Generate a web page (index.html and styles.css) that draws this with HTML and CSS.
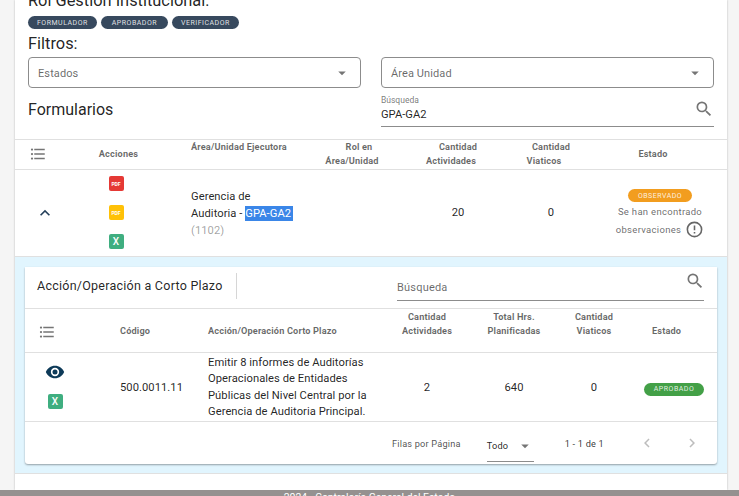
FILE: index.html
```html
<!DOCTYPE html>
<html lang="en">
<head>
  <meta charset="UTF-8">
  <title>Formularios</title>
  <link rel="stylesheet" href="styles.css">
</head>
<body>
  <svg class="sprite" width="0" height="0">
    <symbol id="i-list" viewBox="0 0 24 24"><path d="M7,5H21V7H7V5M7,13V11H21V13H7M4,4.5A1.5,1.5 0 0,1 5.5,6A1.5,1.5 0 0,1 4,7.5A1.5,1.5 0 0,1 2.5,6A1.5,1.5 0 0,1 4,4.5M4,10.5A1.5,1.5 0 0,1 5.5,12A1.5,1.5 0 0,1 4,13.5A1.5,1.5 0 0,1 2.5,12A1.5,1.5 0 0,1 4,10.5M7,19V17H21V19H7M4,16.5A1.5,1.5 0 0,1 5.5,18A1.5,1.5 0 0,1 4,19.5A1.5,1.5 0 0,1 2.5,18A1.5,1.5 0 0,1 4,16.5Z"/></symbol>
    <symbol id="i-search" viewBox="0 0 24 24"><path d="M9.5,3A6.5,6.5 0 0,1 16,9.5C16,11.11 15.41,12.59 14.44,13.73L14.71,14H15.5L20.5,19L19,20.5L14,15.5V14.71L13.73,14.44C12.59,15.41 11.11,16 9.5,16A6.5,6.5 0 0,1 3,9.5A6.5,6.5 0 0,1 9.5,3M9.5,5C7,5 5,7 5,9.5C5,12 7,14 9.5,14C12,14 14,12 14,9.5C14,7 12,5 9.5,5Z"/></symbol>
    <symbol id="i-down" viewBox="0 0 24 24"><path d="M7,10L12,15L17,10H7Z"/></symbol>
    <symbol id="i-up" viewBox="0 0 24 24"><path d="M7.41,15.41L12,10.83L16.59,15.41L18,14L12,8L6,14L7.41,15.41Z"/></symbol>
    <symbol id="i-left" viewBox="0 0 24 24"><path d="M15.41,16.58L10.83,12L15.41,7.41L14,6L8,12L14,18L15.41,16.58Z"/></symbol>
    <symbol id="i-right" viewBox="0 0 24 24"><path d="M8.59,16.58L13.17,12L8.59,7.41L10,6L16,12L10,18L8.59,16.58Z"/></symbol>
    <symbol id="i-alert" viewBox="0 0 24 24"><path d="M11,15H13V17H11V15M11,7H13V13H11V7M12,2C6.47,2 2,6.48 2,12A10,10 0 0,0 12,22A10,10 0 0,0 22,12A10,10 0 0,0 12,2M12,20A8,8 0 0,1 4,12A8,8 0 0,1 12,4A8,8 0 0,1 20,12A8,8 0 0,1 12,20Z"/></symbol>
    <symbol id="i-eye" viewBox="0 0 24 24"><path d="M12,9A3,3 0 0,0 9,12A3,3 0 0,0 12,15A3,3 0 0,0 15,12A3,3 0 0,0 12,9M12,17A5,5 0 0,1 7,12A5,5 0 0,1 12,7A5,5 0 0,1 17,12A5,5 0 0,1 12,17M12,4.5C7,4.5 2.73,7.61 1,12C2.73,16.39 7,19.5 12,19.5C17,19.5 21.27,16.39 23,12C21.27,7.61 17,4.5 12,4.5Z"/></symbol>
  </svg>

  <div class="page">
    <main class="card">
      <div class="top">
        <h2 class="title">Rol Gestión Institucional:</h2>
        <div class="chips">
          <span class="chip chip-navy">FORMULADOR</span>
          <span class="chip chip-navy">APROBADOR</span>
          <span class="chip chip-navy">VERIFICADOR</span>
        </div>
        <h2 class="title title-filter">Filtros:</h2>
        <div class="filters">
          <div class="select"><span>Estados</span><svg class="ic-down"><use href="#i-down"/></svg></div>
          <div class="select"><span>Área Unidad</span><svg class="ic-down"><use href="#i-down"/></svg></div>
          <h2 class="title title-forms">Formularios</h2>
          <div class="search">
            <div class="search-text">
              <label>Búsqueda</label>
              <div class="search-value">GPA-GA2</div>
            </div>
            <svg class="ic-search"><use href="#i-search"/></svg>
          </div>
        </div>
      </div>

      <table class="grid outer">
        <colgroup>
          <col class="o1"><col class="o2"><col class="o3"><col class="o4"><col class="o5"><col class="o6"><col class="o7">
        </colgroup>
        <thead>
          <tr>
            <th><svg class="ic-list"><use href="#i-list"/></svg><span class="sort"></span></th>
            <th class="th-actions">Acciones</th>
            <th class="th-area">Área/Unidad Ejecutora</th>
            <th>Rol en<br>Área/Unidad<span class="sort"></span></th>
            <th>Cantidad<br>Actividades<span class="sort"></span></th>
            <th>Cantidad<br>Viaticos<span class="sort"></span></th>
            <th class="th-last">Estado<span class="sort"></span></th>
          </tr>
        </thead>
        <tbody>
          <tr class="main-row">
            <td><svg class="ic-up"><use href="#i-up"/></svg></td>
            <td>
              <div class="actions">
                <span class="doc doc-red">PDF</span>
                <span class="doc doc-amber">PDF</span>
                <span class="doc doc-green">X</span>
              </div>
            </td>
            <td class="td-area">Gerencia de<br>Auditoria - <span class="hl">GPA-GA2</span><br><span class="muted">(1102)</span></td>
            <td></td>
            <td>20</td>
            <td>0</td>
            <td class="td-last">
              <span class="chip chip-orange">OBSERVADO</span>
              <div class="obs">Se han encontrado</div>
              <div class="obs obs-line">observaciones <svg class="ic-alert"><use href="#i-alert"/></svg></div>
            </td>
          </tr>
        </tbody>
      </table>

      <section class="detail">
        <div class="panel">
          <div class="panel-head">
            <div class="panel-title">Acción/Operación a Corto Plazo</div>
            <div class="panel-search">
              <span>Búsqueda</span>
              <svg class="ic-search"><use href="#i-search"/></svg>
            </div>
          </div>
          <table class="grid inner">
            <colgroup>
              <col class="i1"><col class="i2"><col class="i3"><col class="i4"><col class="i5"><col class="i6"><col class="i7">
            </colgroup>
            <thead>
              <tr>
                <th><svg class="ic-list"><use href="#i-list"/></svg><span class="sort sort-wide"></span></th>
                <th class="left code">Código</th>
                <th class="left desc">Acción/Operación Corto Plazo</th>
                <th>Cantidad<br>Actividades</th>
                <th>Total Hrs.<br>Planificadas</th>
                <th>Cantidad<br>Viaticos</th>
                <th class="left status">Estado</th>
              </tr>
            </thead>
            <tbody>
              <tr class="sub-row">
                <td>
                  <div class="actions actions-sub">
                    <svg class="ic-eye"><use href="#i-eye"/></svg>
                    <span class="doc doc-green">X</span>
                  </div>
                </td>
                <td class="left code">500.0011.11</td>
                <td class="left desc">Emitir 8 informes de Auditorías Operacionales de Entidades Públicas del Nivel Central por la Gerencia de Auditoria Principal.</td>
                <td>2</td>
                <td>640</td>
                <td>0</td>
                <td class="left status"><span class="chip chip-green">APROBADO</span></td>
              </tr>
            </tbody>
          </table>
          <div class="pager">
            <span class="pager-label">Filas por Página</span>
            <div class="pager-select"><span>Todo</span><svg class="ic-down"><use href="#i-down"/></svg></div>
            <span class="pager-count">1 - 1 de 1</span>
            <svg class="ic-nav"><use href="#i-left"/></svg>
            <svg class="ic-nav"><use href="#i-right"/></svg>
          </div>
        </div>
      </section>
    </main>
    <footer class="footer">2024 - Contraloría General del Estado</footer>
  </div>
</body>
</html>
```

FILE: styles.css
```css
* {
  box-sizing: border-box;
}
html, body {
  margin: 0;
  height: 100%;
  overflow: hidden;
}
body {
  background: #f5f5f5;
  font-family: Roboto, "Liberation Sans", sans-serif;
  color: rgba(0, 0, 0, .87);
}
svg {
  fill: currentColor;
  display: inline-block;
}
.sprite {
  position: absolute;
}
.page {
  height: 496px;
  display: flex;
  flex-direction: column;
  overflow: hidden;
}

/* main card */
.card {
  flex: 1;
  min-height: 0;
  margin: 0 12px 0 15px;
  background: #fff;
  box-shadow: 0 0 2px rgba(0, 0, 0, .25);
}
.top {
  margin-top: -10px;
  padding: 0 13px;
  height: 149px;
}
.title {
  margin: 0;
  font-size: 16.4px;
  font-weight: 400;
  line-height: 22px;
}
.chips {
  display: flex;
  gap: 4px;
  margin-top: 4px;
}
.chip {
  display: inline-flex;
  align-items: center;
  justify-content: center;
  height: 13px;
  border-radius: 7px;
  font-size: 7px;
  letter-spacing: .5px;
  color: rgba(255, 255, 255, .85);
}
.chip-navy {
  background: #37495e;
  padding: 0 9px;
}
.chip-navy:nth-child(2) {
  padding: 0 11px;
}
.chip-orange {
  background: #f29d1f;
  width: 64px;
}
.chip-green {
  background: #43a047;
  width: 60px;
  margin: 4px 0 0 -8px;
}
.title-filter {
  margin-top: 4px;
}
.filters {
  display: grid;
  grid-template-columns: 333px 333px;
  column-gap: 20px;
  margin-top: 2px;
}
.select {
  height: 31px;
  border: 1px solid #8c8c8c;
  border-radius: 4px;
  padding: 0 9px;
  display: flex;
  align-items: center;
  justify-content: space-between;
  font-size: 11px;
  letter-spacing: .1px;
  color: rgba(0, 0, 0, .6);
}
.select span {
  margin-top: 2px;
}
.ic-down {
  width: 18px;
  height: 18px;
  color: rgba(0, 0, 0, .54);
}
.title-forms {
  font-size: 16px;
  margin-top: 11px;
}
.search {
  display: flex;
  justify-content: space-between;
  align-items: center;
  height: 35px;
  margin-top: 4px;
  border-bottom: 1px solid #8c8c8c;
}
.search label {
  display: block;
  font-size: 8.5px;
  line-height: 11px;
  color: rgba(0, 0, 0, .55);
}
.search-value {
  font-size: 11.2px;
  line-height: 18px;
}
.ic-search {
  width: 20px;
  height: 20px;
  color: rgba(0, 0, 0, .54);
}

/* tables */
.grid {
  width: 100%;
  table-layout: fixed;
  border-collapse: collapse;
}
.grid th {
  font-size: 9.2px;
  font-weight: 700;
  line-height: 14px;
  letter-spacing: .15px;
  color: rgba(0, 0, 0, .6);
  text-align: center;
  vertical-align: middle;
  padding: 0;
}
.grid td {
  font-size: 11.2px;
  letter-spacing: .05px;
  text-align: center;
  vertical-align: middle;
  padding: 0;
}
.grid .left {
  text-align: left;
}
.sort {
  display: inline-block;
  width: 14px;
}
.sort-wide {
  width: 16px;
}
.ic-list {
  width: 18px;
  height: 18px;
  color: rgba(0, 0, 0, .54);
  vertical-align: middle;
}
.outer {
  border-top: 1px solid #e0e0e0;
}
.outer thead tr {
  height: 29px;
  border-bottom: 1px solid #e0e0e0;
}
.outer thead th {
  padding-bottom: 1px;
}
.o1 { width: 60px; }
.o2 { width: 82px; }
.o3 { width: 158px; }
.o4 { width: 88px; }
.o5 { width: 110px; }
.o6 { width: 76px; }
.o7 { width: auto; }
.outer .th-actions {
  padding-left: 5px;
}
.outer .th-area {
  text-align: left;
  vertical-align: top;
  padding: 0 0 0 34px;
}
.outer .th-last {
  padding-left: 4px;
}
.outer .td-last {
  padding: 1px 0 0 4px;
}
.outer .td-area {
  text-align: left;
  padding: 2px 0 0 34px;
  line-height: 17px;
}
.main-row {
  height: 86px;
}
.ic-up {
  width: 20px;
  height: 20px;
  color: #243f5a;
  vertical-align: middle;
}
.actions {
  display: flex;
  flex-direction: column;
  align-items: center;
  gap: 14px;
}
.doc {
  display: flex;
  align-items: center;
  justify-content: center;
  width: 15px;
  height: 15px;
  border-radius: 2px;
  color: #fff;
  font-size: 5px;
  font-weight: 700;
  letter-spacing: 0;
}
.doc-red { background: #e53935; }
.doc-amber { background: #ffc107; }
.doc-green {
  background: #3fae80;
  font-size: 10px;
  font-weight: 500;
}
.hl {
  background: #3a86e8;
  color: #fff;
  padding: 1px 2px 1px 0;
}
.muted {
  color: rgba(0, 0, 0, .38);
}
.td-last .chip {
  margin-bottom: 1px;
}
.obs {
  font-size: 9.5px;
  line-height: 17px;
  letter-spacing: .3px;
  color: rgba(0, 0, 0, .6);
}
.obs-line {
  display: flex;
  justify-content: center;
  align-items: center;
  gap: 4px;
  line-height: 18px;
}
.ic-alert {
  width: 19px;
  height: 19px;
  color: rgba(0, 0, 0, .6);
}

/* expanded row */
.detail {
  background: #e1f5fe;
  border-top: 1px solid #e0e0e0;
  border-bottom: 1px solid #e0e0e0;
  padding: 10px;
  height: 218px;
}
.panel {
  background: #fff;
  border-radius: 0 0 3px 3px;
  box-shadow: 0 1px 2px rgba(0, 0, 0, .35);
  height: 197px;
}
.panel-head {
  height: 42px;
  display: flex;
  align-items: stretch;
  border-bottom: 1px solid #e0e0e0;
}
.panel-title {
  width: 212px;
  margin: 6px 0 9px;
  padding-left: 12px;
  border-right: 1px solid #d6d6d6;
  font-size: 12.5px;
  letter-spacing: .25px;
  line-height: 26px;
}
.panel-search {
  width: 307px;
  height: 34px;
  margin-left: 160px;
  display: flex;
  justify-content: space-between;
  align-items: flex-start;
  border-bottom: 1px solid #8c8c8c;
  font-size: 11px;
  letter-spacing: .2px;
  color: rgba(0, 0, 0, .6);
}
.panel-search span {
  margin-top: 14px;
}
.panel-search .ic-search {
  margin: 4px -1px 0 0;
}
.i1 { width: 60px; }
.i2 { width: 107px; }
.i3 { width: 192px; }
.i4 { width: 86px; }
.i5 { width: 88px; }
.i6 { width: 72px; }
.i7 { width: auto; }
.inner thead tr {
  height: 44px;
  border-bottom: 1px solid #e0e0e0;
}
.inner thead th {
  vertical-align: bottom;
  padding-bottom: 14px;
}
.inner .ic-list {
  margin-bottom: -3px;
}
.inner .code {
  padding-left: 35px;
}
.inner .desc {
  padding-left: 16px;
  padding-right: 8px;
}
.inner .status {
  padding-left: 22px;
}
.inner td.desc {
  padding-top: 1px;
  line-height: 16.5px;
}
.sub-row {
  height: 69px;
  border-bottom: 1px solid #e0e0e0;
}
.actions-sub {
  gap: 12px;
  padding-bottom: 4px;
}
.ic-eye {
  width: 20px;
  height: 20px;
  color: #0d3a58;
}
.pager {
  display: flex;
  align-items: center;
  height: 42px;
  font-size: 9.2px;
  letter-spacing: .2px;
}
.pager-label {
  margin-left: 367px;
  color: rgba(0, 0, 0, .7);
}
.pager-select {
  width: 47px;
  height: 40px;
  align-self: flex-start;
  padding-top: 8px;
  margin-left: 26px;
  display: flex;
  align-items: center;
  justify-content: space-between;
  border-bottom: 1px solid #8c8c8c;
}
.pager-count {
  margin-left: 31px;
  color: rgba(0, 0, 0, .8);
}
.ic-nav {
  width: 18px;
  height: 18px;
  color: rgba(0, 0, 0, .26);
}
.pager-count + .ic-nav {
  margin-left: 34px;
}
.pager-count + .ic-nav + .ic-nav {
  margin-left: 27px;
}

.footer {
  height: 6px;
  background: #959190;
  color: #fff;
  font-size: 10.4px;
  line-height: 10px;
  text-align: center;
  overflow: hidden;
  padding-top: 3px;
}
```
